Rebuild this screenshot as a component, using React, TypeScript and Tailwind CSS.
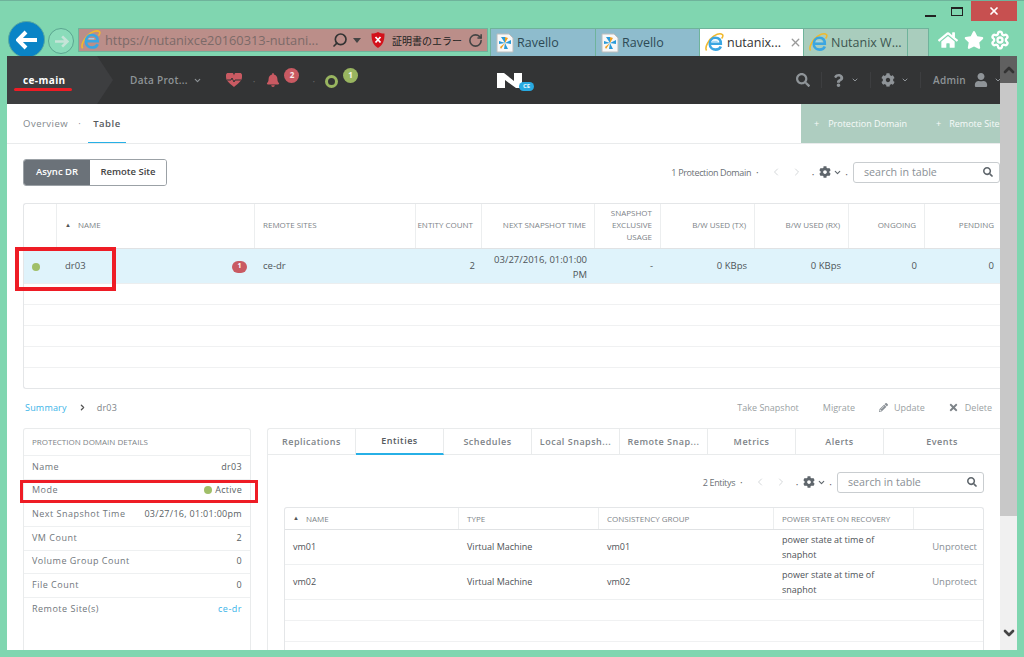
import React from 'react';
import { ChevronDown, ChevronUp, ChevronLeft, ChevronRight, RotateCw, Settings, X, Search } from 'lucide-react';
import { FaBell, FaCog, FaHome, FaPencilAlt, FaQuestion, FaSearch, FaStar, FaTimes, FaUser } from 'react-icons/fa';

function IeLogo({ size = 20 }: { size?: number }) {
  return (
    <svg width={size} height={size} viewBox="0 0 24 24" className="shrink-0">
      <path d="M2 22C-1 18 5 8 11 4c4-2.500 9-3.500 11-2 1 1 .5 3-1 5" fill="none" stroke="#f0b92e" strokeWidth="2" />
      <path d="M7.500 13.500h12.500C20 8 16.500 6 13 6 9 6 6 9.500 6 14c0 5 4 7 7.500 7 3 0 5.500-1.500 6.500-4" fill="none" stroke="#3aa6e2" strokeWidth="3.200" />
      <path d="M9 10.500h7" stroke="#9fd6f2" strokeWidth="1.500" />
    </svg>
  );
}

function RavelloLogo() {
  return (
    <svg width="18" height="20" viewBox="0 0 18 20" className="shrink-0">
      <path d="M1 1h12l4 4v14H1z" fill="#f8f8f8" stroke="#bcbcbc" />
      <path d="M9 10 5 4h4zM9 10l6-3v4zM9 10l3 6H8zM9 10l-6 1V8z" fill="#2a9ad8" />
      <path d="M9 10 9 4l3 1zM9 10l-5 4 1 2z" fill="#f0a020" />
    </svg>
  );
}

function CertShield() {
  return (
    <svg width="14" height="16" viewBox="0 0 14 16" className="shrink-0">
      <path d="M7 0c2 1 4 1.500 6.500 1.500C13.500 9 12 13 7 16 2 13 .5 9 .5 1.500 3 1.500 5 1 7 0z" fill="#d3111a" />
      <path d="M4.500 5l5 5.500M9.500 5l-5 5.500" stroke="#fff" strokeWidth="1.800" />
    </svg>
  );
}

function Tab({ label, active, muted, ravello, w }: { label: string; active?: boolean; muted?: boolean; ravello?: boolean; w: string }) {
  return (
    <div className={`${w} h-[27px] flex items-center gap-[3px] pl-[5px] border-r border-[#6fb39b] text-[12.500px] whitespace-nowrap ${active ? 'bg-white text-[#333]' : muted ? 'bg-[#a9cdbd] text-[#3c5550]' : 'bg-[#8ebccd] text-[#2d4a55]'}`}>
      {ravello ? <RavelloLogo /> : <IeLogo size={19} />}
      <span className="pt-[1px]">{label}</span>
      {active && <X size={13} strokeWidth={2.500} className="ml-auto mr-[1px] text-[#9a9a9a]" />}
    </div>
  );
}

function Dot() {
  return <span className="text-[10px] leading-none text-[#666]">·</span>;
}

function TableTools({ count }: { count: string }) {
  return (
    <div className="flex items-center text-[#999]">
      <span className="mr-[5px] pt-[2px] text-[9px] tracking-[-0.35px] text-[#6b7075]">{count}</span>
      <Dot />
      <ChevronLeft size={12} className="ml-[11px] text-[#d5d8da]" />
      <ChevronRight size={12} className="ml-[9px] text-[#d5d8da]" />
      <span className="ml-[9px]"><Dot /></span>
      <FaCog size={12} className="ml-[5px] text-[#5f666c]" />
      <ChevronDown size={9} strokeWidth={3} className="ml-[2px] text-[#5f666c]" />
      <span className="ml-[3px] mr-[5px]"><Dot /></span>
      <div className="w-[147px] h-[21px] border border-[#c9cdd0] rounded-[3px] flex items-center pl-[10px] pr-[6px] bg-white">
        <span className="text-[10.700px] text-[#8a9096]">search in table</span>
        <FaSearch size={10} className="ml-auto text-[#5f666c]" />
      </div>
    </div>
  );
}

const topCols = 'grid-cols-[33px_198px_161px_66px_113px_66px_94px_94px_76px_77px]';

function TopHeadCell({ children, right, className = '' }: { children?: React.ReactNode; right?: boolean; className?: string }) {
  return (
    <div className={`flex items-center border-r border-[#eceeef] px-2 pb-[2px] text-[8px] leading-[12px] text-[#7d8388] ${right ? 'justify-end text-right' : ''} ${className}`}>
      {children}
    </div>
  );
}

function DetailRow({ label, children, h }: { label: string; children: React.ReactNode; h: string }) {
  return (
    <div className={`${h} flex items-center justify-between border-b border-[#eef0f1] px-2 pb-[2px] text-[9px] tracking-[0.5px] text-[#70767b]`}>
      <span>{label}</span>
      <span className="tracking-[0.3px] text-[#595f64]">{children}</span>
    </div>
  );
}

const entityCols = 'grid-cols-[174px_140px_175px_140px_71px]';

function EntityRow({ name }: { name: string }) {
  return (
    <div className={`grid ${entityCols} h-[35px] border-b border-[#eef0f1] items-center text-[9px] text-[#4e5358]`}>
      <span className="px-2">{name}</span>
      <span className="px-2">Virtual Machine</span>
      <span className="px-2">{name}</span>
      <span className="px-2 leading-[15px]">power state at time of snaphot</span>
      <span className="px-2 text-right text-[9.500px] text-[#8a9096]">Unprotect</span>
    </div>
  );
}

export default function App() {
  const detailTabs = ['Replications', 'Entities', 'Schedules', 'Local Snapsh...', 'Remote Snap...', 'Metrics', 'Alerts'];

  return (
    <div className="relative w-[1024px] h-[657px] overflow-hidden bg-[#80d6b0] border-t border-[#6fb39b] [font-family:'Open_Sans',sans-serif]">
      {/* --- BROWSER CHROME --- */}
      <div className="h-[55px] flex flex-col">
        <div className="h-[27px] flex justify-end items-start">
          <div className="w-[11px] h-[2px] mt-[14px] mr-[15px] bg-[#222]" />
          <div className="w-[12px] h-[9px] mt-[6px] mr-[8px] border border-[#222] border-t-2" />
          <div className="w-[46px] h-[20px] bg-[#c75050] flex items-center justify-center mr-[7px]"><X size={12} strokeWidth={3.500} className="text-white" /></div>
        </div>
        <div className="h-[28px] flex pl-[8px]">
          <div className="w-[37px] h-[37px] -mt-[7px] shrink-0 rounded-full bg-[#0a84c6] flex items-center justify-center border border-[#57a8a0]">
            <svg width="22" height="20" viewBox="0 0 22 20"><path d="M10 2 2 10l8 8M3 10h18" fill="none" stroke="#fff" strokeWidth="4" /></svg>
          </div>
          <div className="w-[26px] h-[26px] ml-[3px] shrink-0 rounded-full border border-[#5ba690] bg-[#8adcba] flex items-center justify-center">
            <svg width="15" height="13" viewBox="0 0 22 20"><path d="M12 2l8 8-8 8M19 10H1" fill="none" stroke="#c5e4d8" strokeWidth="4" /></svg>
          </div>
          <div className="w-[410px] h-[24px] ml-[4px] shrink-0 bg-[#bb8e89] border border-[#6fb39b] flex items-center pl-[2px] pr-[4px] whitespace-nowrap">
            <IeLogo size={20} />
            <span className="ml-[4px] pt-[1px] text-[12.800px] text-[#7c6a68]">https://nutanixce20160313-nutani...</span>
            <Search size={16} strokeWidth={2.500} className="ml-auto text-[#333] -scale-x-100" />
            <svg width="8" height="5" viewBox="0 0 8 5" className="ml-[5px]"><path d="M0 0h8L4 5z" fill="#444" /></svg>
            <span className="ml-[10px]"><CertShield /></span>
            <span className="ml-[7px] text-[10px] text-[#222] [font-family:'Noto_Sans_CJK_JP',sans-serif]">証明書のエラー</span>
            <RotateCw size={15} strokeWidth={2.500} className="ml-[6px] text-[#444]" />
          </div>
          <div className="ml-[2px] flex shrink-0 border-t border-l border-[#6fb39b]">
            <Tab w="w-[105px]" label="Ravello" ravello />
            <Tab w="w-[104px]" label="Ravello" ravello />
            <Tab w="w-[104px]" label="nutanix..." active />
            <Tab w="w-[104px]" label="Nutanix W..." muted />
            <div className="w-[21px] h-[27px] bg-[#a9cdbd] border-r border-[#6fb39b]" />
          </div>
          <div className="ml-[9px] flex items-center gap-[6px] -mt-[4px] text-white">
            <FaHome size={20} />
            <FaStar size={20} />
            <Settings size={20} strokeWidth={2.800} />
          </div>
        </div>
      </div>

      {/* --- PAGE --- */}
      <div className="ml-[7px] w-[1010px] h-[594px] flex bg-white overflow-hidden">
        <div className="w-[993px] shrink-0 flex flex-col">
          {/* Header bar */}
          <div className="relative h-[48px] shrink-0 bg-[#333435] flex items-center overflow-hidden text-[#8f9498]">
            <div className="h-full w-[106px] shrink-0 bg-[#3d3e40] [clip-path:polygon(0_0,85%_0,100%_50%,85%_100%,0_100%)] flex items-center pl-[16px] text-[10px] font-bold text-white tracking-[0.4px]">ce-main</div>
            <span className="ml-[17px] text-[10px] font-semibold tracking-[0.3px]">Data Prot...</span>
            <ChevronDown size={9} strokeWidth={3} className="ml-[5px]" />
            <svg width="16" height="14" viewBox="0 0 16 14" className="ml-[24px]">
              <path d="M8 14C3 10 0 7.500 0 4a4 4 0 0 1 8-1.500A4 4 0 0 1 16 4c0 3.500-3 6-8 10z" fill="#c95a62" />
              <path d="M1 7h4l1-2 2 4 1-2h6" fill="none" stroke="#333435" />
            </svg>
            <span className="ml-[11px] -mt-[3px]"><Dot /></span>
            <FaBell size={14} className="ml-[11px] text-[#c95a62]" />
            <span className="ml-[4px] -mt-[10px] w-[15px] h-[15px] rounded-full bg-[#c95a62] text-[8px] font-bold text-white/90 flex items-center justify-center">2</span>
            <span className="ml-[13px] -mt-[3px]"><Dot /></span>
            <span className="ml-[10px] mt-[2px] w-[13px] h-[13px] rounded-full border-[3px] border-[#99b560]" />
            <span className="ml-[5px] -mt-[10px] w-[15px] h-[15px] rounded-full bg-[#99b560] text-[8px] font-bold text-white/90 flex items-center justify-center">1</span>
            <div className="ml-[139px] flex items-end">
              <svg width="25" height="15" viewBox="0 0 25 15"><path d="M0 0h7l10 8V0h8v15h-6L8 7v8H0z" fill="#fff" /></svg>
              <span className="-ml-[3px] -mb-[3px] w-[15px] h-[9px] rounded-full bg-[#27a9e1] text-[6px] font-bold text-white/90 flex items-center justify-center leading-none">CE</span>
            </div>
            <div className="ml-auto -mr-[2px] flex items-center">
              <FaSearch size={14} />
              <div className="ml-[11px] mr-[10px] w-px h-[16px] bg-[#3d3e40]" />
              <FaQuestion size={13} />
              <ChevronDown size={8} strokeWidth={3} className="ml-[6px]" />
              <div className="ml-[11px] mr-[10px] w-px h-[16px] bg-[#3d3e40]" />
              <FaCog size={14} />
              <ChevronDown size={8} strokeWidth={3} className="ml-[6px]" />
              <div className="ml-[11px] mr-[12px] w-px h-[16px] bg-[#3d3e40]" />
              <span className="text-[10px] font-semibold tracking-[0.3px]">Admin</span>
              <FaUser size={14} className="ml-[8px]" />
              <ChevronDown size={8} strokeWidth={3} className="ml-[6px]" />
            </div>
          </div>

          {/* Sub navigation */}
          <div className="h-[40px] shrink-0 flex items-stretch border-b border-[#e9ebec] pl-[16px] text-[9.500px] tracking-[0.5px]">
            <span className="flex items-center pt-[2px] text-[#83888c]">Overview</span>
            <span className="flex items-center pt-[2px] ml-[10px] text-[#83888c]">·</span>
            <span className="flex items-center pt-[2px] ml-[7px] px-[5px] font-semibold text-[#555a5e] border-b border-[#27b0e6]">Table</span>
            <div className="ml-auto w-[199px] bg-[#aecdc0] flex items-center pl-[13px] text-[9px] tracking-normal text-white/90 whitespace-nowrap overflow-hidden">
              <span className="mr-[9px]">+</span>Protection Domain
              <span className="ml-[29px] mr-[8px]">+</span>Remote Site
            </div>
          </div>

          {/* Toolbar */}
          <div className="h-[59px] shrink-0 flex items-center justify-between pl-[16px] pb-[3px]">
            <div className="flex h-[27px] rounded-[3px] border border-[#9ba1a6] overflow-hidden text-[9.500px] font-semibold">
              <div className="w-[66px] bg-[#6b7279] text-white flex items-center justify-center">Async DR</div>
              <div className="w-[76px] bg-white text-[#444] flex items-center justify-center">Remote Site</div>
            </div>
            <TableTools count="1 Protection Domain" />
          </div>

          {/* Top table */}
          <div className="ml-[16px] h-[186px] shrink-0 border border-r-0 border-[#e4e6e8] rounded-l-[3px] flex flex-col overflow-hidden">
            <div className={`grid ${topCols} h-[45px] shrink-0 border-b border-[#e0e2e4]`}>
              <TopHeadCell />
              <TopHeadCell>
                <span className="text-[6px] mr-[7px] text-[#555]">▲</span>NAME
              </TopHeadCell>
              <TopHeadCell>REMOTE SITES</TopHeadCell>
              <TopHeadCell right className="whitespace-nowrap">ENTITY COUNT</TopHeadCell>
              <TopHeadCell right>NEXT SNAPSHOT TIME</TopHeadCell>
              <TopHeadCell right>SNAPSHOT EXCLUSIVE USAGE</TopHeadCell>
              <TopHeadCell right>B/W USED (TX)</TopHeadCell>
              <TopHeadCell right>B/W USED (RX)</TopHeadCell>
              <TopHeadCell right>ONGOING</TopHeadCell>
              <TopHeadCell right className="border-r-0">PENDING</TopHeadCell>
            </div>
            <div className={`grid ${topCols} h-[35px] shrink-0 pt-[1px] bg-[#dff3fb] items-center text-[9.500px] text-[#4e5358] border-b border-[#eceeef]`}>
              <span className="pl-[8px]"><span className="block w-[8px] h-[8px] rounded-full bg-[#a0bf68]" /></span>
              <span className="pl-[8px] pr-[8px] flex items-center justify-between">
                dr03
                <span className="w-[15px] h-[12px] rounded-full bg-[#c95a62] text-[7px] font-bold text-white flex items-center justify-center">1</span>
              </span>
              <span className="pl-[8px]">ce-dr</span>
              <span className="text-right pr-[7px]">2</span>
              <span className="text-right pr-[8px] pl-[10px] text-[9.500px] leading-[15px]">03/27/2016, 01:01:00 PM</span>
              <span className="text-right pr-[8px]">-</span>
              <span className="text-right pr-[8px]">0 KBps</span>
              <span className="text-right pr-[8px]">0 KBps</span>
              <span className="text-right pr-[8px]">0</span>
              <span className="text-right pr-[8px]">0</span>
            </div>
            <div className="h-[21px] shrink-0 border-b border-[#f0f1f2]" />
            <div className="h-[21px] shrink-0 border-b border-[#f0f1f2]" />
            <div className="h-[21px] shrink-0 border-b border-[#f0f1f2]" />
            <div className="h-[21px] shrink-0 border-b border-[#f0f1f2]" />
          </div>

          {/* Breadcrumb and actions */}
          <div className="h-[39px] shrink-0 flex items-center pl-[18px] pr-[8px] pb-[2px] text-[9px] text-[#9a9fa3]">
            <span className="text-[#3ab4e8] font-medium tracking-[0.2px]">Summary</span>
            <ChevronRight size={9} strokeWidth={3.500} className="ml-[11px] text-[#555]" />
            <span className="ml-[10px] text-[#7d8388] tracking-[0.2px]">dr03</span>
            <span className="ml-auto">Take Snapshot</span>
            <span className="ml-[24px]">Migrate</span>
            <FaPencilAlt size={9} className="ml-[24px] text-[#8a9096]" />
            <span className="ml-[6px]">Update</span>
            <FaTimes size={11} className="ml-[23px] text-[#7d8388]" />
            <span className="ml-[6px]">Delete</span>
          </div>

          {/* Details */}
          <div className="flex-1 min-h-0 flex pl-[16px]">
            <div className="w-[228px] shrink-0 border border-b-0 border-[#e9ebec] rounded-t-[3px]">
              <div className="h-[27px] flex items-center border-b border-[#eef0f1] px-2 text-[8px] text-[#7d8388]">PROTECTION DOMAIN DETAILS</div>
              <DetailRow label="Name" h="h-[24px]">dr03</DetailRow>
              <DetailRow label="Mode" h="h-[23px]">
                <span className="flex items-center gap-[3px]"><span className="w-[8px] h-[8px] rounded-full bg-[#a0bf68]" />Active</span>
              </DetailRow>
              <DetailRow label="Next Snapshot Time" h="h-[24px]">03/27/16, 01:01:00pm</DetailRow>
              <DetailRow label="VM Count" h="h-[24px]">2</DetailRow>
              <DetailRow label="Volume Group Count" h="h-[23px]">0</DetailRow>
              <DetailRow label="File Count" h="h-[24px]">0</DetailRow>
              <div className="h-[23px] pb-[2px] flex items-center justify-between px-2 text-[9px] tracking-[0.5px] text-[#70767b]">
                <span>Remote Site(s)</span>
                <span className="text-[#3ab4e8]">ce-dr</span>
              </div>
            </div>
            <div className="ml-[16px] flex-1 min-w-0 border-l border-t border-[#e9ebec] rounded-tl-[3px] flex flex-col">
              <div className="h-[26px] shrink-0 flex border-b border-[#e9ebec] text-[9px] font-semibold tracking-[0.5px] text-[#7d8388]">
                {detailTabs.map((t) => (
                  <div key={t} className={`w-[88px] flex items-center justify-center whitespace-nowrap border-r border-[#e9ebec] ${t === 'Entities' ? 'text-[#555a5e] border-b-2 border-b-[#27b0e6] h-[26px]' : ''}`}>{t}</div>
                ))}
                <div className="flex-1 flex items-center justify-center">Events</div>
              </div>
              <div className="h-[39px] shrink-0 flex items-end justify-end pr-[16px]">
                <TableTools count="2 Entitys" />
              </div>
              <div className="ml-[16px] mr-[16px] mt-[13px] flex-1 min-h-0 border border-b-0 border-[#e4e6e8] rounded-t-[3px] overflow-hidden">
                <div className={`grid ${entityCols} h-[22px] border-b border-[#e0e2e4] text-[8px] text-[#7d8388]`}>
                  <div className="flex items-center px-2 border-r border-[#eceeef]"><span className="text-[6px] mr-[7px] text-[#555]">▲</span>NAME</div>
                  <div className="flex items-center px-2 border-r border-[#eceeef]">TYPE</div>
                  <div className="flex items-center px-2 border-r border-[#eceeef]">CONSISTENCY GROUP</div>
                  <div className="flex items-center px-2 border-r border-[#eceeef] whitespace-nowrap">POWER STATE ON RECOVERY</div>
                  <div />
                </div>
                <EntityRow name="vm01" />
                <EntityRow name="vm02" />
                <div className="h-[21px] border-b border-[#f0f1f2]" />
                <div className="h-[21px] border-b border-[#f0f1f2]" />
              </div>
            </div>
          </div>
        </div>

        {/* Scrollbar */}
        <div className="flex-1 bg-[#f0f0f0] flex flex-col items-center">
          <div className="w-full h-[27px] shrink-0 bg-[#606060] flex items-center justify-center"><ChevronUp size={16} strokeWidth={4} className="text-[#333]" /></div>
          <div className="w-full h-[433px] shrink-0 bg-[#c8c8c8]" />
          <ChevronDown size={16} strokeWidth={4} className="mt-[109px] shrink-0 text-[#444]" />
        </div>
      </div>

      {/* --- RED ANNOTATIONS --- */}
      <div className="absolute left-[14px] top-[87px] w-[58px] h-[3px] rounded-full bg-[#ee1c25]" />
      <div className="absolute left-[15px] top-[246px] w-[101px] h-[44px] border-[4px] border-[#ee1c25]" />
      <div className="absolute left-[20px] top-[479px] w-[238px] h-[23px] border-[3px] border-[#ee1c25]" />
    </div>
  );
}
